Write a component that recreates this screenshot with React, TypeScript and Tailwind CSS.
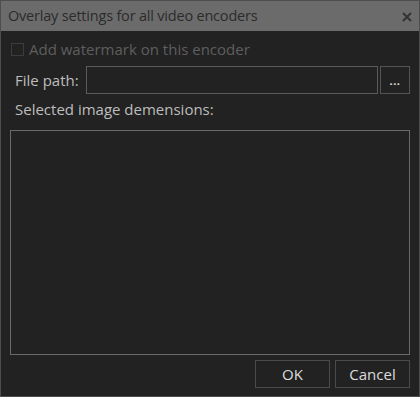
import React from 'react';

const font = { fontFamily: '"Open Sans", "Noto Sans", sans-serif' };

const App: React.FC = () => {
  return (
    <div
      className="w-[420px] h-[397px] bg-[#222222] border border-[#4e4e4e] flex flex-col select-none"
      style={font}
    >
      <div className="h-[30px] bg-[#6b6b6b] flex items-center justify-between pl-[7px] pr-[7px]">
        <span className="text-[14.5px] text-[#2b2b2b] leading-none tracking-[-0.2px]">
          Overlay settings for all video encoders
        </span>
        <svg width="10" height="10" viewBox="0 0 10 10" className="mt-[2px]">
          <path d="M1 1L9 9M9 1L1 9" stroke="#333333" strokeWidth="2" />
        </svg>
      </div>

      <div className="flex-1 flex flex-col px-[9px]">
        <div className="mt-[7px] h-[22px] flex items-center gap-[5px] pl-[1px]">
          <div className="w-[13px] h-[13px] border border-[#3c3c3c]" />
          <span className="text-[15px] text-[#5e5e5e]">Add watermark on this encoder</span>
        </div>

        <div className="mt-[6px] h-[28px] flex items-center">
          <span className="text-[15px] text-[#bdbdbd] pl-[5px] w-[76px]">File path:</span>
          <div className="h-[28px] w-[293px] border border-[#5a5a5a]" />
          <button className="ml-[2px] h-[28px] w-[30px] border border-[#555555] flex items-end justify-center pb-[7px]">
            <span className="text-[11px] leading-none text-[#e0e0e0] font-bold tracking-[0.5px]">...</span>
          </button>
        </div>

        <div className="mt-[5px] h-[20px] flex items-center pl-[5px]">
          <span className="text-[15px] text-[#bdbdbd]">Selected image demensions:</span>
        </div>

        <div className="mt-[11px] flex-1 border border-[#6a6a6a]" />

        <div className="mt-[5px] mb-[8px] h-[28px] flex justify-end gap-[5px]">
          <button className="w-[75px] h-[28px] border border-[#4a4a4a] text-[15px] text-[#dcdcdc]">
            OK
          </button>
          <button className="w-[75px] h-[28px] border border-[#4a4a4a] text-[15px] text-[#dcdcdc]">
            Cancel
          </button>
        </div>
      </div>
    </div>
  );
};

export default App;
